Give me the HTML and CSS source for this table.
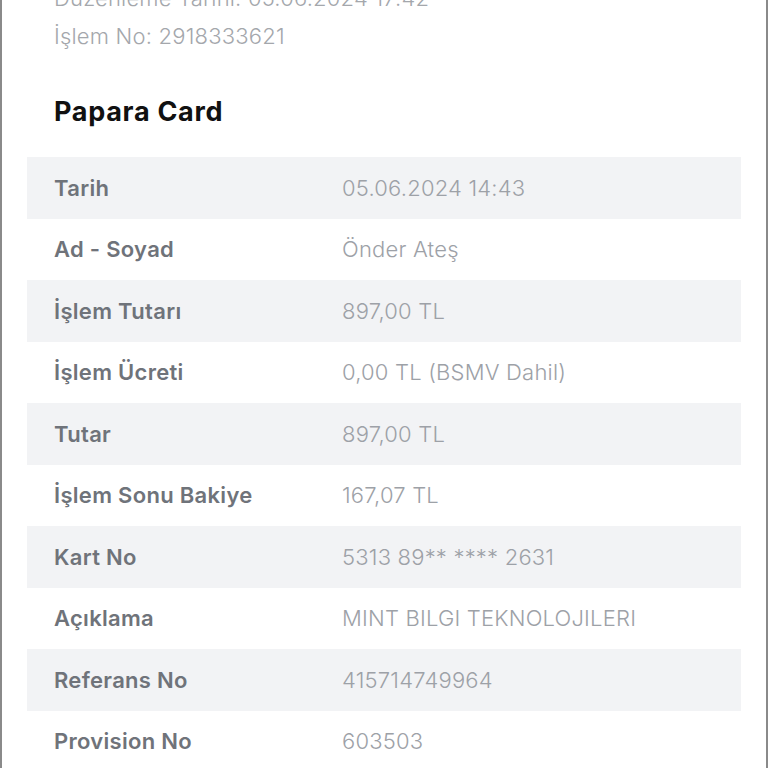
FILE: index.html
```html
<!DOCTYPE html>
<html lang="tr">
<head>
<meta charset="utf-8">
<link rel="stylesheet" href="styles.css">
</head>
<body>
<div class="frame">
  <div class="meta">
    <div class="meta-line">Düzenleme Tarihi: 05.06.2024 17:42</div>
    <div class="meta-line">İşlem No: 2918333621</div>
  </div>
  <h1 class="title">Papara Card</h1>
  <div class="table">
    <div class="row alt"><div class="label">Tarih</div><div class="value">05.06.2024 14:43</div></div>
    <div class="row"><div class="label">Ad - Soyad</div><div class="value">Önder Ateş</div></div>
    <div class="row alt"><div class="label">İşlem Tutarı</div><div class="value">897,00 TL</div></div>
    <div class="row"><div class="label">İşlem Ücreti</div><div class="value">0,00 TL (BSMV Dahil)</div></div>
    <div class="row alt"><div class="label">Tutar</div><div class="value">897,00 TL</div></div>
    <div class="row"><div class="label">İşlem Sonu Bakiye</div><div class="value">167,07 TL</div></div>
    <div class="row alt"><div class="label">Kart No</div><div class="value">5313 89** **** 2631</div></div>
    <div class="row"><div class="label">Açıklama</div><div class="value">MINT BILGI TEKNOLOJILERI</div></div>
    <div class="row alt"><div class="label">Referans No</div><div class="value">415714749964</div></div>
    <div class="row"><div class="label">Provision No</div><div class="value">603503</div></div>
  </div>
</div>
</body>
</html>
```
FILE: styles.css
```css
html, body {
  margin: 0;
  padding: 0;
  background: #ffffff;
  overflow: hidden;
}
body {
  font-family: Inter, "Noto Sans", sans-serif;
}
.frame {
  height: 768px;
  box-sizing: border-box;
  border-left: 2px solid #8a8a8a;
  border-right: 2px solid #8a8a8a;
  overflow: hidden;
}
.meta {
  margin-top: -21px;
  padding-left: 52px;
}
.meta-line {
  font-size: 22px;
  line-height: 38px;
  font-weight: 300;
  letter-spacing: 0.2px;
  color: #a4a7ac;
}
.title {
  margin: 42px 0 0 52px;
  font-size: 27px;
  line-height: 30px;
  font-weight: 700;
  letter-spacing: 0.7px;
  color: #111111;
}
.table {
  margin: 30px 25px 0 25px;
}
.row {
  display: grid;
  grid-template-columns: 288px 1fr;
  align-items: center;
  height: 61.5px;
  padding-left: 27px;
}
.row.alt {
  background: #f2f3f5;
}
.label {
  font-size: 22px;
  font-weight: 600;
  letter-spacing: 0.3px;
  color: #6f737a;
}
.value {
  font-size: 22px;
  font-weight: 300;
  letter-spacing: 0.2px;
  color: #9da1a7;
}
```
